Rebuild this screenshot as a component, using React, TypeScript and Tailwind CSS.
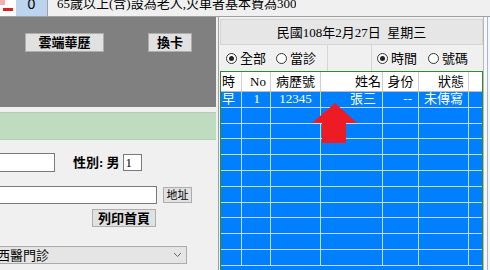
import React from "react";

const font = { fontFamily: '"Liberation Serif", "Noto Sans CJK TC", serif' };

const cols = "grid grid-cols-[21px_29px_50px_62px_36px_50px_13px]";

function Radio({ on, label }: { on?: boolean; label: string }) {
  return (
    <div className="flex items-center gap-[3px]">
      <span className="w-[11px] h-[11px] rounded-full border border-[#333] bg-white flex items-center justify-center">
        {on && <span className="w-[5px] h-[5px] rounded-full bg-[#222]" />}
      </span>
      <span className="text-[13px] leading-none text-black">{label}</span>
    </div>
  );
}

export default function App() {
  const rows = Array.from({ length: 11 });
  return (
    <div className="relative w-[490px] h-[270px] overflow-hidden bg-[#f0f0f0] flex flex-col" style={font}>
      {/* top bar */}
      <div className="h-[17px] flex items-stretch border-b border-[#a0a0a0] bg-[#f0f0f0] overflow-hidden">
        <div className="w-[16px] relative bg-white">
          <span className="absolute left-0 top-0 w-[5px] h-[5px] bg-[#f4b0b0]" />
          <span className="absolute left-[3px] top-[8px] w-[10px] h-[3px] bg-[#e02020]" />
        </div>
        <div className="w-[32px] bg-[#bcd4ee] flex justify-center overflow-hidden border-r border-[#a0a0a0]">
          <span className="text-[14px] leading-[14px] -mt-[3px] text-black" style={{ fontFamily: '"Liberation Sans", sans-serif' }}>0</span>
        </div>
        <div className="pl-[9px] overflow-hidden">
          <span className="block text-[13px] leading-[14px] -mt-[3px] text-black whitespace-nowrap">65歲以上(含)設為老人,火車者基本費為300</span>
        </div>
      </div>

      <div className="flex flex-1 min-h-0">
        {/* left column */}
        <div className="w-[216px] flex flex-col">
          <div className="h-[90px] bg-[#808080] flex pt-[16px] items-start">
            <button className="ml-[25px] w-[79px] h-[19px] bg-[#e1e1e1] border border-[#adadad] text-[13px] leading-none font-bold text-black">雲端華歷</button>
            <button className="ml-[44px] w-[44px] h-[19px] bg-[#e1e1e1] border border-[#adadad] text-[13px] leading-none font-bold text-black">換卡</button>
          </div>
          <div className="h-[5px]" />
          <div className="h-[28px] bg-[#c0dcc0] border-y border-[#b4ceb4]" />
          <div className="flex items-center mt-[13px] h-[19px]">
            <div className="-ml-[2px] w-[57px] h-[19px] bg-white border border-[#7a7a7a]" />
            <span className="ml-[18px] text-[13px] font-bold text-black">性別: 男</span>
            <div className="ml-[3px] w-[19px] h-[17px] bg-white border border-[#7a7a7a] text-[13px] leading-[15px] pl-[2px] text-black">1</div>
          </div>
          <div className="flex items-center mt-[14px] h-[18px]">
            <div className="-ml-[2px] w-[159px] h-[18px] bg-white border border-[#7a7a7a]" />
            <button className="ml-[6px] w-[29px] h-[16px] bg-[#e1e1e1] border border-[#adadad] text-[11px] leading-none text-black">地址</button>
          </div>
          <div className="flex mt-[5px]">
            <button className="ml-[92px] w-[64px] h-[18px] bg-[#e1e1e1] border border-[#adadad] text-[13px] leading-none font-bold text-black">列印首頁</button>
          </div>
          <div className="mt-[19px] -ml-[2px] w-[189px] h-[18px] bg-[#e5e5e5] border border-[#acacac] flex items-center justify-between overflow-hidden">
            <span className="-ml-[2px] text-[13px] leading-none text-black whitespace-nowrap">西醫門診</span>
            <svg width="9" height="6" viewBox="0 0 9 6" className="mr-[4px]">
              <path d="M1 1 L4.5 4.5 L8 1" fill="none" stroke="#666" strokeWidth="1" />
            </svg>
          </div>
        </div>

        {/* right column */}
        <div className="ml-[2px] w-[265px] flex flex-col border-l border-[#a0a0a0] pl-[1px]">
          <div className="mt-[2px] h-[26px] bg-[#e6e6e6] border border-[#d4d4d4] flex items-center justify-center">
            <span className="text-[13px] leading-none text-black">民國108年2月27日&nbsp;&nbsp;星期三</span>
          </div>
          <div className="h-[26px] flex items-center">
            <div className="w-[108px] h-full flex items-center gap-[10px] pl-[6px] border-r border-[#d6d6d6]">
              <Radio on label="全部" />
              <Radio label="當診" />
            </div>
            <div className="w-[44px] h-full border-r border-[#d6d6d6]" />
            <div className="flex-1 h-full flex items-center gap-[11px] pl-[5px]">
              <Radio on label="時間" />
              <Radio label="號碼" />
            </div>
          </div>
          {/* grid */}
          <div className="flex-1 border border-[#2e8b2e] border-b-0 bg-[#0080ff] overflow-hidden">
            <div className={`${cols} h-[20px] bg-white border-b border-[#bcbcbc] text-[13px] leading-[19px] text-black`}>
              <div className="border-r border-[#d0d0d0] pl-[1px]">時</div>
              <div className="border-r border-[#d0d0d0] text-right pr-[4px]">No</div>
              <div className="border-r border-[#d0d0d0] text-center">病歷號</div>
              <div className="border-r border-[#d0d0d0] text-right pr-[1px]">姓名</div>
              <div className="border-r border-[#d0d0d0] text-center">身份</div>
              <div className="border-r border-[#d0d0d0] text-right pr-[4px]">狀態</div>
              <div />
            </div>
            {rows.map((_, i) => (
              <div key={i} className={`${cols} h-[15.8px] border-b border-[#c4dcff] text-[13px] leading-[14px] text-white`}>
                <div className="border-r border-[#c4dcff] pl-[1px]">{i === 0 ? "早" : ""}</div>
                <div className="border-r border-[#c4dcff] text-right pr-[10px]">{i === 0 ? "1" : ""}</div>
                <div className="border-r border-[#c4dcff] text-center">{i === 0 ? "12345" : ""}</div>
                <div className="border-r border-[#c4dcff] text-right pr-[6px]">{i === 0 ? "張三" : ""}</div>
                <div className="border-r border-[#c4dcff] text-right pr-[6px]">{i === 0 ? "--" : ""}</div>
                <div className="border-r border-[#c4dcff] text-center">{i === 0 ? "未傳寫" : ""}</div>
                <div />
              </div>
            ))}
          </div>
        </div>

        {/* scroll strip */}
        <div className="w-[7px] bg-[#f7f7f7] border-l border-[#b8b8b8] flex justify-end">
          <div className="w-[1px] h-full bg-[#9fb8d8] mr-[2px]" />
        </div>
      </div>

      {/* red arrow */}
      <svg className="absolute left-[310px] top-[101px]" width="50" height="44" viewBox="0 0 50 44">
        <polygon points="25,2 47,22 36,22 36,42 12,42 12,22 2,22" fill="#ed1c24" />
      </svg>
    </div>
  );
}
